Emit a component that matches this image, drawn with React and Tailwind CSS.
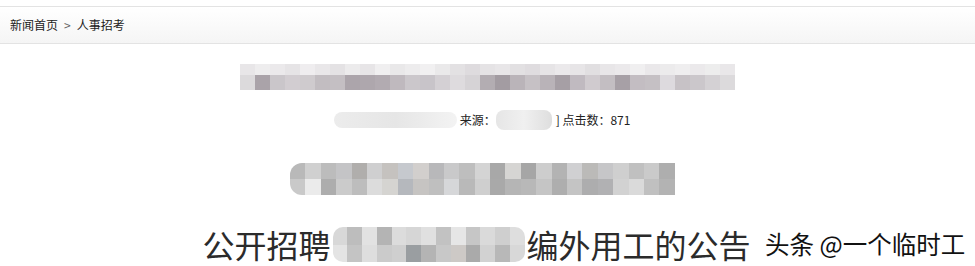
import React from 'react'

const bar1Top = [
  'bg-[#e8e6e8]', 'bg-[#eeedee]', 'bg-[#ebe9eb]', 'bg-[#e6e4e6]', 'bg-[#efedef]', 'bg-[#e9e7e9]',
  'bg-[#e4e2e4]', 'bg-[#ecebec]', 'bg-[#e7e5e7]', 'bg-[#f0eff0]', 'bg-[#e9e8e9]', 'bg-[#edeced]',
  'bg-[#f1f0f1]', 'bg-[#eae9ea]', 'bg-[#e3e1e3]', 'bg-[#dedbde]', 'bg-[#e5e3e5]', 'bg-[#e8e6e8]',
  'bg-[#e2e0e2]', 'bg-[#dfdcdf]', 'bg-[#e6e4e6]', 'bg-[#ebe9eb]', 'bg-[#e7e5e7]', 'bg-[#e1dfe1]',
  'bg-[#e8e6e8]', 'bg-[#ebe9eb]', 'bg-[#f0eff0]', 'bg-[#eae8ea]', 'bg-[#ecebec]', 'bg-[#efeeef]',
  'bg-[#ebe9eb]', 'bg-[#ededed]', 'bg-[#e9e7e9]',
]
const bar1Bottom = [
  'bg-[#dcdadc]', 'bg-[#aaa3a9]', 'bg-[#cac6ca]', 'bg-[#d2cdd1]', 'bg-[#cfcbce]', 'bg-[#c2bdc1]',
  'bg-[#c4bfc3]', 'bg-[#aca5ab]', 'bg-[#aea7ad]', 'bg-[#b2abb1]', 'bg-[#bfb9be]', 'bg-[#cbc7cb]',
  'bg-[#c8c4c9]', 'bg-[#d4d0d4]', 'bg-[#dedbde]', 'bg-[#d6d3d6]', 'bg-[#b3adb2]', 'bg-[#a39ca2]',
  'bg-[#bab4b9]', 'bg-[#c6c1c5]', 'bg-[#b9b3b8]', 'bg-[#a69fa5]', 'bg-[#c0bac0]', 'bg-[#d0cbcf]',
  'bg-[#c3bec2]', 'bg-[#a7a0a6]', 'bg-[#c3bdc2]', 'bg-[#c5c0c4]', 'bg-[#dddade]', 'bg-[#c7c2c6]',
  'bg-[#cbc7cb]', 'bg-[#d4d1d4]', 'bg-[#dcdadc]',
]
const bar2Top = [
  'bg-[#b9b9b9]', 'bg-[#d0d0d0]', 'bg-[#bcbcbc]', 'bg-[#c4c4c6]', 'bg-[#b0aeac]', 'bg-[#cfcfd0]',
  'bg-[#c5c2bf]', 'bg-[#c6c9ce]', 'bg-[#d2cfcd]', 'bg-[#b8b8ba]', 'bg-[#c9c9ca]', 'bg-[#bebebe]',
  'bg-[#d4d4d4]', 'bg-[#a8a8a8]', 'bg-[#d6d5d3]', 'bg-[#a6a6a6]', 'bg-[#cdcdcd]', 'bg-[#b3b3b3]',
  'bg-[#d0d0d2]', 'bg-[#bbbab8]', 'bg-[#c6c6c8]', 'bg-[#cfcfcf]', 'bg-[#c0c0c0]', 'bg-[#cacaca]',
  'bg-[#aeaeae]',
]
const bar2Bottom = [
  'bg-[#c9c9c9]', 'bg-[#ebebeb]', 'bg-[#adadad]', 'bg-[#cbcbcb]', 'bg-[#bdbdbd]', 'bg-[#dcdcdc]',
  'bg-[#d5d4d1]', 'bg-[#b5b8bd]', 'bg-[#c6c4c2]', 'bg-[#bfbfbf]', 'bg-[#d6d7d9]', 'bg-[#b9b9b9]',
  'bg-[#cfcfcf]', 'bg-[#a9a9a9]', 'bg-[#b5b5b5]', 'bg-[#b8b8b8]', 'bg-[#c5c5c5]', 'bg-[#aeaeae]',
  'bg-[#c4c4c4]', 'bg-[#adadae]', 'bg-[#b1b1b3]', 'bg-[#d2d2d2]', 'bg-[#dadada]', 'bg-[#c0c0c0]',
  'bg-[#b3b3b3]',
]
const headTop = [
  'bg-[#d8d8d8]', 'bg-[#bdbdbd]', 'bg-[#e2e2e2]', 'bg-[#b4b4b4]', 'bg-[#dcdcdc]', 'bg-[#d6d6d6]',
  'bg-[#e0e0e0]', 'bg-[#c2c2c2]', 'bg-[#e6e6e6]', 'bg-[#c6c6c6]', 'bg-[#dadada]', 'bg-[#cfcfcf]',
  'bg-[#dedede]',
]
const headBottom = [
  'bg-[#e4e4e4]', 'bg-[#c4c4c4]', 'bg-[#dedede]', 'bg-[#cbcbcb]', 'bg-[#cfcfcf]', 'bg-[#9a9ea1]',
  'bg-[#b4b4b4]', 'bg-[#c8c8c8]', 'bg-[#cdc9c6]', 'bg-[#aaaaaa]', 'bg-[#d2d2d2]', 'bg-[#b8b8b8]',
  'bg-[#d8d8d8]',
]

function Mosaic({ top, bottom, cell, topH, bottomH, className = '' }) {
  return (
    <div className={`flex flex-col overflow-hidden ${className}`}>
      <div className="flex">
        {top.map((c, i) => (
          <div key={i} className={`${cell} ${topH} ${c}`} />
        ))}
      </div>
      <div className="flex">
        {bottom.map((c, i) => (
          <div key={i} className={`${cell} ${bottomH} ${c}`} />
        ))}
      </div>
    </div>
  )
}

export default function App() {
  return (
    <div className="relative h-[266px] w-[975px] overflow-hidden bg-white text-[#333] font-['Noto_Sans_CJK_SC','Noto_Sans',sans-serif]">
      <div className="h-[6px]" />
      <div className="flex h-[38px] items-center border-y border-[#e3e3e3] bg-gradient-to-b from-white to-[#f5f5f5] pl-[10px] text-[12px] text-[#222]">
        <span>新闻首页</span>
        <span className="mx-[6px] text-[#666]">&gt;</span>
        <span>人事招考</span>
      </div>

      <div className="flex flex-col items-center">
        <Mosaic
          className="mt-[20px] w-[495px]"
          top={bar1Top}
          bottom={bar1Bottom}
          cell="w-[15px] shrink-0"
          topH="h-[11px]"
          bottomH="h-[15px]"
        />

        <div className="mt-[20px] ml-[-11px] flex h-[20px] items-center text-[12px] text-[#222]">
          <div className="h-[16px] w-[123px] rounded-full bg-gradient-to-r from-[#ececec] via-[#e6e6e6] to-[#f3f3f3]" />
          <span className="ml-[3px]">来源：</span>
          <div className="h-[20px] w-[56px] rounded-[8px] bg-gradient-to-r from-[#e6e6e6] via-[#f0f0f0] to-[#dedede]" />
          <span className="ml-[4px]">] 点击数：871</span>
        </div>

        <Mosaic
          className="mt-[33px] ml-[-10px] w-[385px] rounded-l-[12px]"
          top={bar2Top}
          bottom={bar2Bottom}
          cell="w-[15.4px] shrink-0"
          topH="h-[16px]"
          bottomH="h-[16px]"
        />

        <div className="mt-[31px] mr-[22px] flex items-center text-[32px] leading-[36px] text-[#2b2b2b]">
          <span>公开招聘</span>
          <Mosaic
            className="mx-[2px] w-[192px] rounded-[10px]"
            top={headTop}
            bottom={headBottom}
            cell="w-[14.8px] shrink-0"
            topH="h-[18px]"
            bottomH="h-[17px]"
          />
          <span>编外用工的公告</span>
        </div>
      </div>

      <div className="absolute left-[765px] top-[229px] text-[24.5px] leading-[30px] text-[#111] [text-shadow:0_0_2px_#fff]">
        头条 @一个临时工
      </div>
    </div>
  )
}
